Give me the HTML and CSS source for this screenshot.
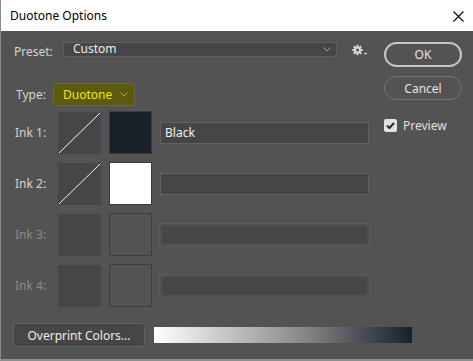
FILE: index.html
```html
<!DOCTYPE html>
<html lang="en">
<head>
    <meta charset="UTF-8">
    <title>Duotone Options</title>
    <link rel="stylesheet" href="styles.css">
</head>
<body>
    <div class="dialog">
        <div class="titlebar">
            <span class="title">Duotone Options</span>
            <svg class="close" width="11" height="11" viewBox="0 0 11 11">
                <path d="M0.5 0.5 L10.5 10.5 M10.5 0.5 L0.5 10.5" stroke="#000" stroke-width="1.1" fill="none"/>
            </svg>
        </div>

        <div class="body">
            <div class="top">
                <div class="left">
                    <!-- Preset -->
                    <div class="preset-row">
                        <span class="label preset-label">Preset:</span>
                        <div class="select preset-select">
                            <span>Custom</span>
                            <svg class="chevron" width="8" height="5" viewBox="0 0 8 5"><path d="M0.5 0.5 L4 4 L7.5 0.5" stroke="#a8a8a8" fill="none"/></svg>
                        </div>
                        <svg class="gear" width="16" height="12" viewBox="0 0 16 12">
                            <g fill="#d8d8d8">
                                <circle cx="5.5" cy="6" r="3.6"/>
                                <rect x="4.5" y="0.8" width="2" height="10.4"/>
                                <rect x="0.3" y="5" width="10.4" height="2"/>
                                <rect x="4.5" y="0.8" width="2" height="10.4" transform="rotate(45 5.5 6)"/>
                                <rect x="4.5" y="0.8" width="2" height="10.4" transform="rotate(-45 5.5 6)"/>
                                <rect x="12" y="9" width="3" height="1.2"/>
                            </g>
                            <circle cx="5.5" cy="6" r="1.5" fill="#535353"/>
                        </svg>
                    </div>

                    <!-- Type -->
                    <div class="type-row">
                        <span class="label type-label">Type:</span>
                        <div class="select type-select">
                            <span>Duotone</span>
                            <svg class="chevron" width="8" height="5" viewBox="0 0 8 5"><path d="M0.5 0.5 L4 4 L7.5 0.5" stroke="#b0b060" fill="none"/></svg>
                        </div>
                    </div>

                    <!-- Inks -->
                    <div class="inks">
                        <div class="ink-row">
                            <span class="label ink-label">Ink 1:</span>
                            <div class="curve">
                                <svg width="43" height="42" viewBox="0 0 43 42"><path d="M1 41 L42 1" stroke="#f4f4f4" stroke-width="1" fill="none"/></svg>
                            </div>
                            <div class="swatch swatch-black"></div>
                            <div class="field">Black</div>
                        </div>
                        <div class="ink-row">
                            <span class="label ink-label">Ink 2:</span>
                            <div class="curve">
                                <svg width="43" height="42" viewBox="0 0 43 42"><path d="M1 41 L42 1" stroke="#f4f4f4" stroke-width="1" fill="none"/></svg>
                            </div>
                            <div class="swatch swatch-white"></div>
                            <div class="field"></div>
                        </div>
                        <div class="ink-row disabled">
                            <span class="label ink-label">Ink 3:</span>
                            <div class="curve"></div>
                            <div class="swatch"></div>
                            <div class="field"></div>
                        </div>
                        <div class="ink-row disabled">
                            <span class="label ink-label">Ink 4:</span>
                            <div class="curve"></div>
                            <div class="swatch"></div>
                            <div class="field"></div>
                        </div>
                    </div>
                </div>

                <div class="right">
                    <button class="btn btn-ok">OK</button>
                    <button class="btn btn-cancel">Cancel</button>
                    <label class="preview">
                        <span class="check">
                            <svg width="13" height="13" viewBox="0 0 13 13"><path d="M3 6.5 L5.5 9 L10 4" stroke="#2a2a2a" stroke-width="2" fill="none"/></svg>
                        </span>
                        <span>Preview</span>
                    </label>
                </div>
            </div>

            <div class="bottom-row">
                <button class="overprint">Overprint Colors...</button>
                <div class="gradient"></div>
            </div>
        </div>
    </div>
</body>
</html>
```

FILE: styles.css
```css
/* Geral */
html, body {
    margin: 0;
    padding: 0;
    background: #8f8f8f;
}

body {
    font-family: "Noto Sans", "Open Sans", sans-serif;
    font-size: 12px;
    color: #d8d8d8;
}

.dialog {
    width: 473px;
    height: 359px;
    box-sizing: border-box;
    border-left: 1px solid #8a8a8a;
    background: #535353;
    display: flex;
    flex-direction: column;
}

/* Barra de titulo */
.titlebar {
    height: 31px;
    background: #fff;
    display: flex;
    align-items: center;
    justify-content: space-between;
    padding: 0 9px 0 9px;
    box-sizing: border-box;
}

.title {
    color: #000;
    font-size: 12px;
}

.close {
    margin-top: 1px;
}

/* Corpo */
.body {
    padding: 11px 0 0 13px;
}

.top {
    display: flex;
}

.left {
    width: 357px;
}

.right {
    margin-left: 13px;
    width: 78px;
    display: flex;
    flex-direction: column;
}

.label {
    color: #d4d4d4;
    white-space: nowrap;
}

.select {
    box-sizing: border-box;
    display: flex;
    align-items: center;
    justify-content: space-between;
    border-radius: 3px;
}

/* Preset */
.preset-row {
    display: flex;
    align-items: center;
    height: 15px;
}

.preset-label {
    width: 49px;
    margin-top: 3px;
}

.preset-select {
    width: 274px;
    height: 15px;
    background: #464646;
    border: 1px solid #606060;
    padding: 0 5px 0 9px;
    color: #ececec;
}

.preset-select span {
    margin-top: -2px;
}

.gear {
    margin-left: 15px;
    margin-top: 1px;
}

/* Tipo */
.type-row {
    display: flex;
    align-items: center;
    height: 23px;
    margin-top: 26px;
}

.type-label {
    width: 37px;
    padding-left: 2px;
}

.type-select {
    width: 82px;
    height: 23px;
    background: #5b5a0e;
    border: 1px solid #6a6a3c;
    padding: 0 6px 0 9px;
    color: #ecec00;
}

/* Tintas */
.inks {
    margin-top: 5px;
    display: flex;
    flex-direction: column;
    gap: 8px;
}

.ink-row {
    display: flex;
    align-items: center;
    height: 43px;
}

.ink-label {
    width: 44px;
    padding-left: 1px;
    box-sizing: border-box;
}

.curve {
    width: 43px;
    height: 42px;
    background: #464646;
}

.curve svg {
    display: block;
}

.swatch {
    width: 43px;
    height: 43px;
    margin-left: 8px;
    box-sizing: border-box;
    border: 1px solid #3a3a3a;
}

.swatch-black {
    background: #18202a;
    border-color: #3c3c3c;
}

.swatch-white {
    background: #fff;
    border-color: #3a3a3a;
}

.field {
    width: 209px;
    height: 22px;
    margin-left: 8px;
    box-sizing: border-box;
    background: #464646;
    border: 1px solid #616161;
    padding-left: 4px;
    line-height: 19px;
    color: #f2f2f2;
}

.disabled .ink-label {
    color: #8a8a8a;
}

.disabled .swatch {
    background: #535353;
    border-color: #3e3e3e;
}

.disabled .field {
    background: #474747;
    border: 2px solid #515151;
    outline: 1px solid #5c5c5c;
}

/* Botoes */
.btn {
    font-family: inherit;
    font-size: 12px;
    color: #e6e6e6;
    background: transparent;
    box-sizing: border-box;
    width: 78px;
    padding: 0;
}

.btn-ok {
    height: 25px;
    border: 2px solid #c6c6c6;
    border-radius: 13px;
}

.btn-cancel {
    height: 24px;
    margin-top: 9px;
    border: 1px solid #747474;
    border-radius: 12px;
}

.preview {
    display: flex;
    align-items: center;
    margin-top: 19px;
    height: 13px;
    color: #e0e0e0;
}

.check {
    width: 13px;
    height: 13px;
    background: #e2e2e2;
    border-radius: 2px;
    margin-right: 6px;
}

.check svg {
    display: block;
}

/* Linha inferior */
.bottom-row {
    display: flex;
    align-items: center;
    margin-top: 16px;
    margin-left: -1px;
}

.overprint {
    font-family: inherit;
    font-size: 12px;
    color: #ececec;
    width: 132px;
    height: 24px;
    box-sizing: border-box;
    background: #464646;
    border: 1px solid #616161;
    border-radius: 3px;
    padding: 0;
}

.gradient {
    width: 258px;
    height: 16px;
    margin-left: 9px;
    background: linear-gradient(to right, #ffffff, #8e8e8e 55%, #18202a);
}
```
